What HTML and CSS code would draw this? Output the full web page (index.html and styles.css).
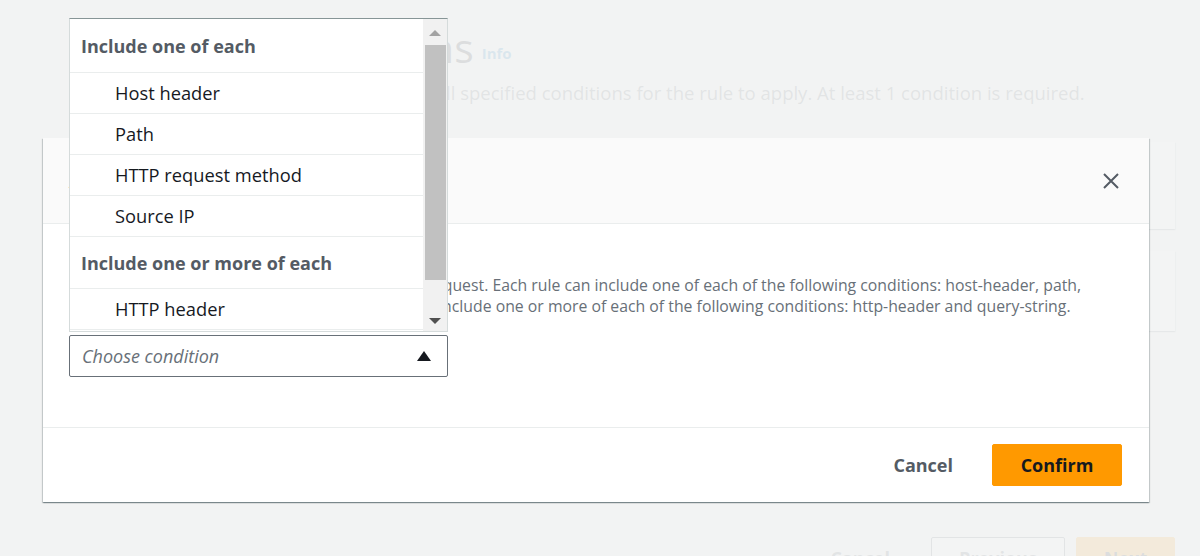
FILE: index.html
```html
<!DOCTYPE html>
<html lang="en">
<head>
<meta charset="utf-8">
<title>Add condition</title>
<link rel="stylesheet" href="styles.css">
</head>
<body>
<div class="page">
  <header class="page-head">
    <h1 class="page-title">Rule conditions<a class="info-link">Info</a></h1>
    <p class="page-desc">Inbound requests must meet all specified conditions for the rule to apply. At least 1 condition is required.</p>
  </header>
  <section class="card card-a"></section>
  <section class="card card-b"></section>
  <div class="page-actions">
    <button class="btn-link page-cancel">Cancel</button>
    <button class="btn-normal">Previous</button>
    <button class="btn-primary">Next</button>
  </div>
</div>
<div class="overlay"></div>
<div class="modal">
  <div class="modal-header">
    <h2 class="modal-title">Add condition</h2>
    <button class="modal-close" aria-label="Close">
      <svg width="18" height="18" viewBox="0 0 18 18"><path d="M2 2L16 16M16 2L2 16" stroke="#545b64" stroke-width="2" fill="none"/></svg>
    </button>
  </div>
  <div class="modal-body">
    <p class="modal-desc"><span class="line">Conditions specify the criteria for each incoming request. Each rule can include one of each of the following conditions: host-header, path,</span><span class="line">http-request-method, source-ip. Any rule can also include one or more of each of the following conditions: http-header and query-string.</span></p>
    <div class="select-wrap">
      <div class="dropdown">
        <ul class="options">
          <li class="group">Include one of each</li>
          <li class="option">Host header</li>
          <li class="option">Path</li>
          <li class="option">HTTP request method</li>
          <li class="option">Source IP</li>
          <li class="group">Include one or more of each</li>
          <li class="option">HTTP header</li>
          <li class="option">Query string</li>
        </ul>
        <div class="scrollbar">
          <span class="sb-up"></span>
          <span class="sb-thumb"></span>
          <span class="sb-down"></span>
        </div>
      </div>
      <div class="select">
        <span class="placeholder">Choose condition</span>
        <span class="caret"></span>
      </div>
    </div>
  </div>
  <div class="modal-footer">
    <button class="btn-link dark">Cancel</button>
    <button class="btn-primary solid">Confirm</button>
  </div>
</div>
</body>
</html>
```
FILE: styles.css
```css
* { box-sizing: border-box; }
html, body { margin: 0; padding: 0; }
body {
  width: 1200px;
  height: 556px;
  overflow: hidden;
  background: #f2f3f3;
  font-family: "Open Sans", "Noto Sans", sans-serif;
  color: #16191f;
  position: relative;
}
button { font-family: inherit; cursor: pointer; }

.page { padding: 23px 25px 0 180px; }
.page-title {
  margin: 0;
  font-size: 41px;
  line-height: 48px;
  font-weight: 400;
  color: #16191f;
  white-space: nowrap;
}
.info-link {
  font-size: 15px;
  font-weight: 700;
  color: #0073bb;
  margin-left: 8px;
  vertical-align: 4px;
}
.page-desc {
  margin: 4px 0 0 0;
  font-size: 18.5px;
  line-height: 24px;
  color: #545b64;
  white-space: nowrap;
}
.card {
  background: #fff;
  box-shadow: 0 1px 1px 0 rgba(0,28,36,.3), 1px 1px 1px 0 rgba(0,28,36,.15), -1px 1px 1px 0 rgba(0,28,36,.15);
}
.card-a { margin-top: 37px; height: 87px; }
.card-b { margin-top: 22px; height: 80px; }
.page-actions {
  margin-top: 206px;
  display: flex;
  justify-content: flex-end;
  align-items: center;
  gap: 11px;
}
.btn-link {
  background: none;
  border: 0;
  font-size: 18px;
  font-weight: 700;
  color: #545b64;
  padding: 0 20px;
  height: 42px;
}
.page-cancel { margin-right: 10px; }
.btn-normal {
  height: 42px;
  width: 134px;
  background: #fff;
  border: 1px solid #545b64;
  border-radius: 2px;
  font-size: 18px;
  font-weight: 700;
  color: #545b64;
}
.btn-primary {
  height: 42px;
  width: 99px;
  background: #ff9900;
  border: 1px solid #ff9900;
  border-radius: 2px;
  font-size: 18px;
  font-weight: 700;
  color: #16191f;
}

.overlay {
  position: absolute;
  inset: 0;
  background: rgba(242,243,243,.9);
}

.modal {
  position: absolute;
  left: 43px;
  top: 138px;
  width: 1106px;
  height: 364px;
  background: #fff;
  display: flex;
  flex-direction: column;
  box-shadow: 0 1px 1px 0 rgba(0,28,36,.3), 1px 1px 1px 0 rgba(0,28,36,.15), -1px 1px 1px 0 rgba(0,28,36,.15);
}
.modal-header {
  height: 86px;
  background: #fafafa;
  border-bottom: 1px solid #eaeded;
  display: flex;
  align-items: center;
  justify-content: space-between;
  padding: 0 27px 0 26px;
}
.modal-title { margin: 0; font-size: 20px; font-weight: 700; color: #16191f; }
.modal-close {
  background: none;
  border: 0;
  padding: 0;
  width: 22px;
  height: 22px;
  display: flex;
  align-items: center;
  justify-content: center;
}
.modal-body {
  flex: 1;
  padding: 51px 26px 0 26px;
}
.modal-desc {
  margin: 0;
  font-size: 15.8px;
  line-height: 21px;
  color: #687078;
}
.modal-desc .line { display: block; white-space: nowrap; }

.select-wrap {
  position: relative;
  margin-top: 18px;
  width: 379px;
}
.select {
  height: 42px;
  border: 1px solid #687078;
  border-radius: 2px;
  display: flex;
  align-items: center;
  justify-content: space-between;
  padding: 0 16px 0 12px;
}
.placeholder {
  font-size: 18px;
  font-style: italic;
  color: #687078;
}
.caret {
  width: 0;
  height: 0;
  border-left: 7px solid transparent;
  border-right: 7px solid transparent;
  border-bottom: 10px solid #16191f;
}

.dropdown {
  position: absolute;
  left: 0;
  bottom: calc(100% + 3px);
  width: 379px;
  height: 314px;
  background: #fff;
  border: 1px solid #d5dbdb;
  border-top-color: #879596;
  display: flex;
  z-index: 2;
}
.options {
  list-style: none;
  margin: 0;
  padding: 0;
  flex: 1;
  overflow: hidden;
}
.group {
  height: 53px;
  display: flex;
  align-items: center;
  padding-left: 11px;
  font-size: 18px;
  font-weight: 700;
  color: #545b64;
}
.option + .group { height: 52px; border-top: 1px solid #eaeded; }
.option {
  height: 41px;
  border-top: 1px solid #eaeded;
  display: flex;
  align-items: center;
  padding-left: 45px;
  padding-bottom: 1px;
  font-size: 18.3px;
  color: #16191f;
}
.scrollbar {
  width: 24px;
  background: #f1f1f1;
  display: flex;
  flex-direction: column;
  align-items: center;
  padding: 11px 0 7px;
}
.sb-up {
  width: 0; height: 0;
  border-left: 6px solid transparent;
  border-right: 6px solid transparent;
  border-bottom: 6px solid #a3a3a3;
}
.sb-thumb {
  width: 21px;
  height: 235px;
  margin-top: 9px;
  background: #c1c1c1;
}
.sb-down {
  margin-top: auto;
  width: 0; height: 0;
  border-left: 6px solid transparent;
  border-right: 6px solid transparent;
  border-top: 6px solid #505050;
}

.modal-footer {
  height: 75px;
  border-top: 1px solid #eaeded;
  display: flex;
  align-items: center;
  justify-content: flex-end;
  padding-right: 27px;
}
.btn-link.dark { color: #545b64; margin-right: 19px; }
.btn-primary.solid { width: 130px; }
```
